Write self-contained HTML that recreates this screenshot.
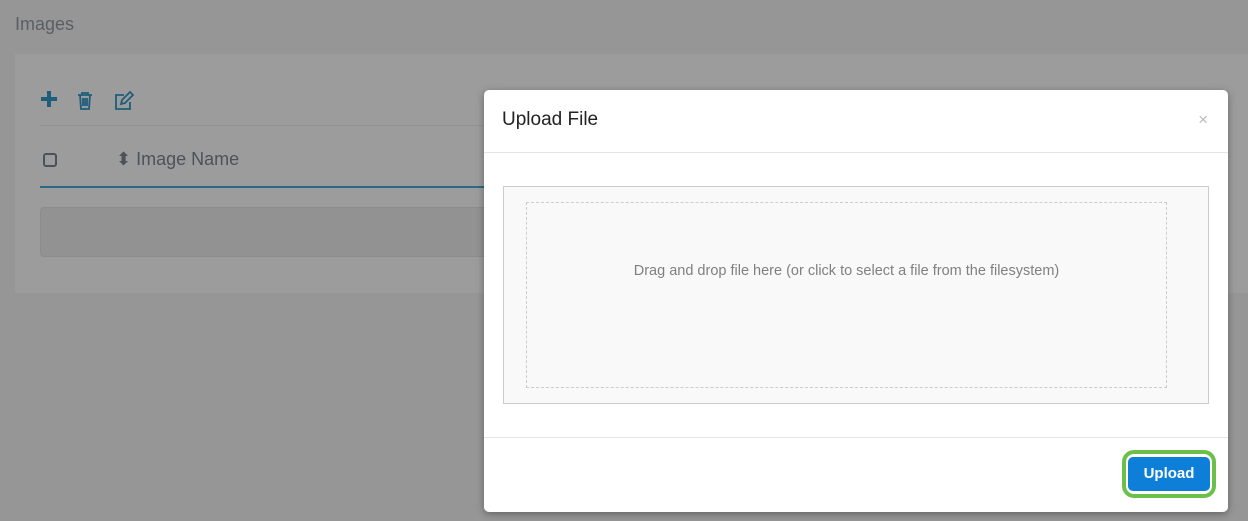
<!DOCTYPE html><html><head><style>
body{margin:0;width:1248px;height:521px;background:#969696;font-family:"Liberation Sans",sans-serif;position:relative;overflow:hidden}
.a{position:absolute}
</style></head><body>
<div class="a" style="left:15px;top:14px;font-size:18px;color:#5a5f66">Images</div>
<div class="a" style="left:15px;top:54px;width:1233px;height:239px;background:#9c9c9c"></div>
<div class="a" style="left:40px;top:125px;width:460px;height:1px;background:#929292"></div>
<svg class="a" style="left:40px;top:89px" width="100" height="22">
<path d="M7 2v16M-1 10h16" stroke="#1e5e7a" stroke-width="4" transform="translate(2,0)"/>
<g fill="none" stroke="#1e5e7a" stroke-width="1.8"><path d="M38 6h14M42 6V4h6v2M40 6l1 14h8l1-14M43 9v8M45 9v8M47 9v8"/>
<path d="M84 6h-8v14h14v-7"/><path d="M81 15l1-4 8-8 3 3-8 8z"/></g></svg>
<div class="a" style="left:43px;top:153px;width:14px;height:14px;border:2px solid #4d5258;border-radius:3px;box-sizing:border-box"></div>
<div class="a" style="left:116px;top:149px;font-size:18px;color:#4d5258">&#x2B0D; Image Name</div>
<div class="a" style="left:40px;top:186px;width:460px;height:2px;background:#2a6a86"></div>
<div class="a" style="left:40px;top:207px;width:460px;height:48px;border:1px solid #8c8c8c;border-radius:4px;background:#929292"></div>
<div class="a" style="left:484px;top:90px;width:744px;height:422px;background:#fff;border-radius:5px;box-shadow:0 2px 8px rgba(0,0,0,.35)">
<div class="a" style="left:18px;top:19px;font-size:19px;color:#222">Upload File</div>
<div class="a" style="right:20px;top:20px;font-size:17px;color:#bbb">×</div>
<div class="a" style="left:0;top:62px;width:744px;height:1px;background:#e5e5e5"></div>
<div class="a" style="left:19px;top:96px;width:706px;height:218px;border:1px solid #ccc;box-sizing:border-box;background:#f9f9f9"></div>
<div class="a" style="left:42px;top:112px;width:641px;height:186px;border:1px dashed #ccc;box-sizing:border-box;text-align:center;padding-top:60px;font-size:14.5px;color:#808080">Drag and drop file here (or click to select a file from the filesystem)</div>
<div class="a" style="left:0;top:347px;width:744px;height:1px;background:#e5e5e5"></div>
<div class="a" style="left:638px;top:360px;width:94px;height:48px;border:4px solid #6cc04a;border-radius:12px;box-sizing:border-box"></div>
<div class="a" style="left:644px;top:367px;width:82px;height:34px;background:#0d7fd8;border-radius:5px;color:#fff;font-size:15px;font-weight:bold;text-align:center;line-height:34px">Upload</div>
</div>
</body></html>
